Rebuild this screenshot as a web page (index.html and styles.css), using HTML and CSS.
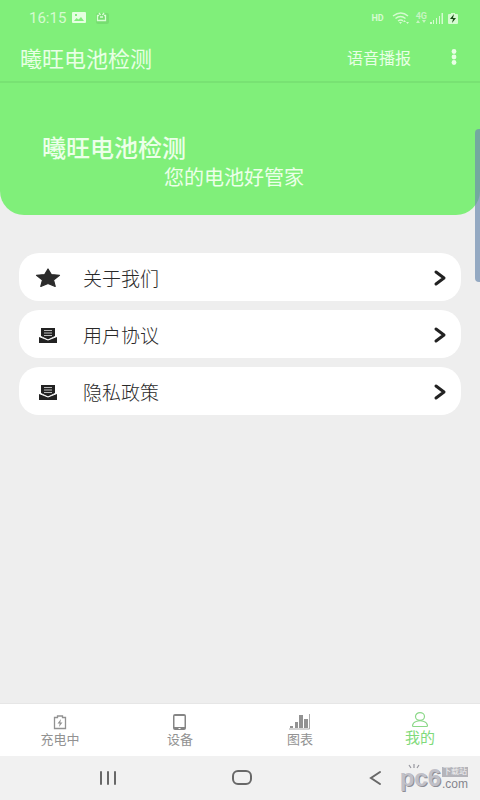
FILE: index.html
```html
<!DOCTYPE html>
<html lang="zh-CN">
<head>
<meta charset="utf-8">
<meta name="viewport" content="width=device-width, initial-scale=1">
<title>曦旺电池检测</title>
<link rel="stylesheet" href="styles.css">
</head>
<body>
<header class="top">
  <div class="status">
    <span class="clock">16:15</span>
    <svg width="14" height="12" viewBox="0 0 14 12"><path fill="#e4ffe0" fill-rule="evenodd" d="M1 0h12a1 1 0 0 1 1 1v9a1 1 0 0 1-1 1H1a1 1 0 0 1-1-1V1a1 1 0 0 1 1-1zm1 9h10L9 5 6.500 7.500 4.500 6zM3 2v2h2V2z"/></svg>
    <svg class="tv" width="14" height="12" viewBox="0 0 14 12"><rect x="1" y="1" width="13" height="11" rx="2" fill="#76de70"/><path d="M4 1l1.500 2M9 1L7.500 3M4 3.500H2.500v5h8v-5H9M5 5h3" fill="none" stroke="#d9ffd5" stroke-width="1.300"/></svg>
    <span class="hd">HD</span>
    <svg class="wifi" width="18" height="13" viewBox="0 0 18 13"><g fill="none" stroke="#d5fbd0" stroke-width="1.500"><path d="M1 4q8-6 15 0M3.500 6.500q5-4 10 0M6 9q3-2 5 0"/></g><path d="M7 10h3l-1.500 2zM11 10l1.500-2 1.500 2zM14 10h3l-1.500 2z" fill="#d5fbd0"/></svg>
    <span class="net"><b>4G</b><svg width="10" height="4" viewBox="0 0 10 4"><path d="M0 3l2-3 2 3zM6 0h4L8 3z" fill="#c6f5c1"/></svg></span>
    <svg width="13" height="11" viewBox="0 0 13 11"><path d="M0 11V9h2v2zM3 11V7h1v4zM6 11V5h1v6zM9 11V3h1v8zM11.500 11V0H13v11z" fill="#d5fbd0"/></svg>
    <svg class="charge" width="10" height="12" viewBox="0 0 10 12"><path d="M3 1h4v1h2a1 1 0 0 1 1 1v8a1 1 0 0 1-1 1H1a1 1 0 0 1-1-1V3a1 1 0 0 1 1-1h2z" fill="#d5fbd0"/><path d="M6 2L2 7h3l-1 4 4-5H5z" fill="#174915"/></svg>
  </div>
  <div class="appbar">
    <h1>曦旺电池检测</h1>
    <button class="voice" type="button">语音播报</button>
    <button class="more" type="button" aria-label="更多"><svg width="6" height="16" viewBox="0 0 6 16" fill="#e8ffe5"><circle cx="3" cy="2.500" r="2.400"/><circle cx="3" cy="8" r="2.400"/><circle cx="3" cy="13.500" r="2.400"/></svg></button>
  </div>
</header>
<main>
  <section class="hero">
    <h2>曦旺电池检测</h2>
    <p>您的电池好管家</p>
  </section>
  <div class="list">
    <a class="card" href="#about">
      <svg width="26" height="20" viewBox="0 0 26 20"><path d="M13 1l3.300 5.500 8.200.8-6 4.600 1.700 6.600L13 15.500l-7.200 3 1.700-6.600-6-4.600 8.200-.8z" fill="#2b2b2b" stroke="#2b2b2b" stroke-width="1.200" stroke-linejoin="round"/></svg>
      <span>关于我们</span>
      <svg class="go" width="14" height="18" viewBox="0 0 14 18"><path d="M3 3l8 6-8 6"/></svg>
    </a>
    <a class="card" href="#terms">
      <svg width="26" height="20" viewBox="0 0 26 20"><path d="M6 3h14v8l-7 3.500L6 11zM4 12h2l7 3 7-3h2v6H4z" fill="#222"/><path d="M9 5.500h8M9 8h8M9 10.500h8" stroke="#bbb"/><path d="M4 11.500l9 3.500 9-3.500" fill="none" stroke="#fff"/></svg>
      <span>用户协议</span>
      <svg class="go" width="14" height="18" viewBox="0 0 14 18"><path d="M3 3l8 6-8 6"/></svg>
    </a>
    <a class="card" href="#privacy">
      <svg width="26" height="20" viewBox="0 0 26 20"><path d="M6 3h14v8l-7 3.500L6 11zM4 12h2l7 3 7-3h2v6H4z" fill="#222"/><path d="M9 5.500h8M9 8h8M9 10.500h8" stroke="#bbb"/><path d="M4 11.500l9 3.500 9-3.500" fill="none" stroke="#fff"/></svg>
      <span>隐私政策</span>
      <svg class="go" width="14" height="18" viewBox="0 0 14 18"><path d="M3 3l8 6-8 6"/></svg>
    </a>
  </div>
</main>
<nav class="tabs">
  <a href="#charging"><svg width="22" height="16" viewBox="0 0 22 16"><path d="M5.500 3.500h3V2h5v1.500h3v11h-11z" fill="none" stroke="#929292" stroke-width="1.300"/><path d="M12 5l-3.500 4.500h2.200L10 13l3.500-4.500h-2.200z" fill="#929292"/></svg><span>充电中</span></a>
  <a href="#device"><svg width="22" height="16" viewBox="0 0 22 16"><path fill="#858585" fill-rule="evenodd" d="M6 0h9a2 2 0 0 1 2 2v12a2 2 0 0 1-2 2H6a2 2 0 0 1-2-2V2a2 2 0 0 1 2-2zm-.5 2v11h10V2zm4 12v1h2v-1z"/></svg><span>设备</span></a>
  <a href="#chart"><svg width="22" height="16" viewBox="0 0 22 16"><path d="M1 12h3v2H1zM6 8h3v6H6zM10 1h4v13h-4zM15 5h4v9h-4z" fill="#929292"/><path d="M0 15h20.500V0" fill="none" stroke="#aaa"/></svg><span>图表</span></a>
  <a class="active" href="#me" aria-current="page"><svg width="22" height="16" viewBox="0 0 22 16" fill="none" stroke="#8bd888" stroke-width="1.200"><ellipse cx="11" cy="4.500" rx="4.500" ry="3.800"/><path d="M7 9.500q-3 1-3.500 4 0 1 1 1h13q1 0 1-1-.5-3-3.500-4-4-1.500-8 0z"/></svg><span>我的</span></a>
</nav>
<footer class="system">
  <button type="button" aria-label="最近"><svg width="20" height="16" viewBox="0 0 20 16"><path d="M3 2v12M10 2v12M17 2v12"/></svg></button>
  <button type="button" aria-label="主页"><svg width="20" height="16" viewBox="0 0 20 16"><rect x="1" y="1" width="18" height="13" rx="5"/></svg></button>
  <button type="button" aria-label="返回"><svg width="20" height="16" viewBox="0 0 20 16"><path d="M15 2L6 8l9 6"/></svg></button>
</footer>
<div class="mark"><svg class="rays" width="12" height="5" viewBox="0 0 12 5"><path d="M1 1l2 3M6 0v4M11 1L9 4" stroke="#96969e" stroke-width="1.200"/></svg><span class="logo">pc6</span><span class="site"><small>下载站</small><span>.com</span></span></div>
<div class="edge"></div>
</body>
</html>
```
FILE: styles.css
```css
* { box-sizing: border-box; }
body {
  margin: 0;
  min-height: 100vh;
  position: relative;
  display: flex;
  flex-direction: column;
  background: #eee;
  font-family: "Noto Sans CJK SC", sans-serif;
}
h1, h2, p { margin: 0; font-weight: 400; }
a { color: inherit; text-decoration: none; }
button { border: 0; padding: 0; background: none; font: inherit; color: inherit; }
svg { display: block; flex: none; }

.top { background: #80ef7a; border-bottom: 2px solid #78e273; color: #e8ffe5; }
.status { display: flex; align-items: center; height: 32px; padding: 4px 22px 0 29px; font-family: Roboto, sans-serif; }
.clock { font-size: 15px; color: #d5fbd0; margin-right: 6px; }
.tv { margin-left: 9px; }
.hd { margin-left: auto; font-size: 9px; font-weight: 700; color: #d5fbd0; }
.wifi { margin: 0 6px 0 8px; }
.net { display: flex; flex-direction: column; font-size: 9px; line-height: 8px; color: #c6f5c1; margin-right: 3px; }
.charge { margin-left: 5px; }
.appbar { display: flex; align-items: center; height: 49px; padding: 0 23px 0 20px; }
.appbar h1 { font-size: 22px; line-height: 30px; }
.voice { margin-left: auto; margin-right: 40px; font-size: 16px; line-height: 24px; }

main { flex: 1; }
.hero {
  padding: 48px 42px 24px;
  background: #80ef7a;
  border-radius: 0 0 24px 24px;
  color: #ecffe9;
}
.hero h2 { font-size: 24px; line-height: 32px; font-weight: 500; }
.hero p { padding-right: 12px; text-align: center; font-size: 20px; line-height: 28px; }
.list { display: flex; flex-direction: column; gap: 9px; padding: 38px 19px; }
.card {
  display: flex;
  align-items: center;
  height: 48px;
  padding: 2px 14px 0 16px;
  border-radius: 20px;
  background: #fff;
  color: #292929;
  font-size: 19px;
  line-height: 28px;
}
.card span { margin-left: 22px; font-weight: 300; }
.go { margin-left: auto; fill: none; stroke: #222; stroke-width: 3; stroke-linecap: round; stroke-linejoin: round; }

.tabs {
  display: grid;
  grid-template-columns: repeat(4, 1fr);
  height: 53px;
  border-top: 1px solid #e6e6e6;
  background: #fff;
  color: #929292;
  font-size: 13px;
  line-height: 18px;
}
.tabs a { display: flex; flex-direction: column; align-items: center; justify-content: center; padding-top: 2px; }
.tabs .active { color: #7fda7b; font-size: 15px; padding-top: 0; padding-bottom: 2px; }

.system { display: flex; align-items: center; justify-content: space-between; height: 44px; padding: 0 95px 0 98px; background: #f1f1f1; }
.system svg { fill: none; stroke: #686868; stroke-width: 2; stroke-linecap: round; }

.mark {
  position: absolute;
  right: 12px;
  bottom: 8px;
  display: flex;
  align-items: center;
  gap: 1px;
  color: #c0c0c8;
  text-shadow: 1px 1px 0 #8e8e96;
  font-family: "Liberation Sans", "Noto Sans CJK SC", sans-serif;
}
.rays { position: absolute; left: 8px; top: 0; }
.logo { font-size: 24px; line-height: 28px; font-weight: 700; }
.site { display: flex; flex-direction: column; gap: 1px; font-size: 12px; line-height: 12px; color: #85858d; text-shadow: none; }
.site small { padding: 0 1px; background: #b4b4ba; color: #f1f1f1; font-size: 8px; line-height: 10px; }

.edge {
  position: absolute;
  right: 0;
  top: 129px;
  width: 5px;
  height: 153px;
  border-radius: 4px 0 0 4px;
  background: rgba(110, 140, 175, .7);
}
```
